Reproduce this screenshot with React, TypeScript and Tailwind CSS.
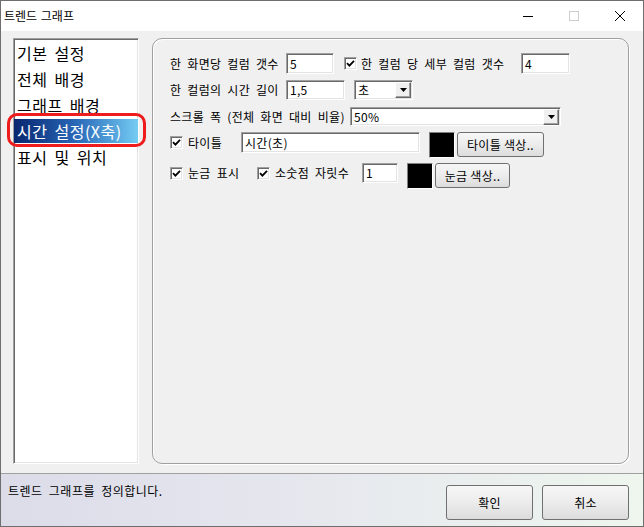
import React from 'react';

const KR = "font-['Noto_Sans_CJK_KR','Noto_Sans',sans-serif]";

// 움푹 들어간 입력칸 테두리
const sunken =
  'bg-white border border-t-[#a0a0a0] border-l-[#a0a0a0] border-r-white border-b-white shadow-[inset_1px_1px_0_#696969,inset_-1px_-1px_0_#e3e3e3]';

const pushButton =
  'border border-[#707070] rounded-[3px] bg-gradient-to-b from-[#f7f7f7] via-[#ececec] to-[#dcdcdc] text-[12px] text-black flex items-center justify-center whitespace-nowrap';

function Check() {
  return (
    <span className={`w-[13px] h-[13px] shrink-0 flex items-center justify-center ${sunken}`}>
      <svg width="9" height="9" viewBox="0 0 9 9">
        <path d="M1 4.2 L3.4 6.6 L8 1.8" stroke="#000" strokeWidth="1.8" fill="none" />
      </svg>
    </span>
  );
}

function ArrowBtn() {
  return (
    <span className="w-[16px] h-[16px] shrink-0 bg-[#f0f0f0] border border-t-white border-l-white border-r-[#696969] border-b-[#696969] shadow-[inset_-1px_-1px_0_#a0a0a0] flex items-center justify-center">
      <svg width="7" height="4" viewBox="0 0 7 4">
        <path d="M0 0 H7 L3.5 4 Z" fill="#000" />
      </svg>
    </span>
  );
}

function Combo({ value, w, h }: { value: string; w: string; h: string }) {
  return (
    <div className={`${w} ${h} shrink-0 ${sunken} flex items-center justify-between pl-[3px] pr-[1px]`}>
      <span className="text-[12px] leading-none">{value}</span>
      <ArrowBtn />
    </div>
  );
}

function Field({ value, w, h }: { value: string; w: string; h: string }) {
  return (
    <div className={`${w} ${h} shrink-0 ${sunken} flex items-center pl-[3px] text-[12px] leading-none`}>{value}</div>
  );
}

function Swatch() {
  return <div className="w-[26px] h-[26px] shrink-0 bg-black border border-t-[#808080] border-l-[#808080] border-r-white border-b-white" />;
}

const menuItems = ['기본 설정', '전체 배경', '그래프 배경', '시간 설정(X축)', '표시 및 위치'];

export default function App() {
  const selected = 3;

  return (
    <div className={`w-[644px] h-[527px] flex flex-col border border-[#6e6e6e] bg-white text-black [word-spacing:3px] tracking-[0.3px] ${KR}`}>
      {/* 타이틀 바 */}
      <div className="h-[30px] flex items-center bg-white shrink-0">
        <span className="pl-[3px] text-[12px] [word-spacing:1px] tracking-normal">트렌드 그래프</span>
        <div className="ml-auto flex h-full">
          <div className="w-[46px] h-full flex items-center justify-center">
            <svg width="10" height="1"><rect width="10" height="1" fill="#000" /></svg>
          </div>
          <div className="w-[46px] h-full flex items-center justify-center">
            <svg width="10" height="10"><rect x="0.5" y="0.5" width="9" height="9" fill="none" stroke="#cccccc" /></svg>
          </div>
          <div className="w-[46px] h-full flex items-center justify-center">
            <svg width="10" height="10"><path d="M0 0 L10 10 M10 0 L0 10" stroke="#000" strokeWidth="1" /></svg>
          </div>
        </div>
      </div>

      {/* 본문 */}
      <div className="h-[442px] shrink-0 bg-[#f0f0f0] flex pl-[12px] pr-[14px] pt-[7px] pb-[9px] gap-[13px]">
        {/* 왼쪽 목록 */}
        <div className={`w-[126px] h-full ${sunken} pt-[1px] flex flex-col`}>
          {menuItems.map((item, i) => (
            <div key={item} className="h-[26px] relative flex items-center text-[16px] tracking-[0.5px] whitespace-nowrap">
              {i === selected ? (
                <>
                  <div className="absolute left-[-7px] right-[-8px] top-[-5px] bottom-[-3px] border-[3px] border-[#ee1c1c] rounded-[10px]" />
                  <div className="w-full h-[24px] pl-[3px] flex items-center bg-gradient-to-r from-[#0a2670] via-[#2a68b8] to-[#74ccf2] text-white">
                    {item}
                  </div>
                </>
              ) : (
                <span className="pl-[3px]">{item}</span>
              )}
            </div>
          ))}
        </div>

        {/* 오른쪽 그룹 상자 */}
        <div className="flex-1 h-full border border-[#a0a0a0] rounded-[10px] shadow-[inset_1px_1px_0_#fff,1px_1px_0_#fff] pl-[17px] pt-[14px] flex flex-col text-[12px] whitespace-nowrap">
          <div className="flex items-center h-[21px]">
            <span className="w-[116px] shrink-0">한 화면당 컬럼 갯수</span>
            <Field value="5" w="w-[48px]" h="h-[21px]" />
            <span className="ml-[10px]"><Check /></span>
            <span className="ml-[4px] w-[160px] shrink-0">한 컬럼 당 세부 컬럼 갯수</span>
            <Field value="4" w="w-[49px]" h="h-[21px]" />
          </div>

          <div className="flex items-center h-[20px] mt-[6px]">
            <span className="w-[116px] shrink-0">한 컬럼의 시간 길이</span>
            <Field value="1,5" w="w-[59px]" h="h-[20px]" />
            <span className="ml-[9px]"><Combo value="초" w="w-[59px]" h="h-[20px]" /></span>
          </div>

          <div className="flex items-center h-[19px] mt-[7px]">
            <span className="w-[180px] shrink-0">스크롤 폭 (전체 화면 대비 비율)</span>
            <Combo value="50%" w="w-[211px]" h="h-[19px]" />
          </div>

          <div className="flex items-start mt-[6px]">
            <div className="flex items-center h-[21px] w-[71px] shrink-0">
              <Check />
              <span className="ml-[5px]">타이틀</span>
            </div>
            <Field value="시간(초)" w="w-[179px]" h="h-[21px]" />
            <span className="ml-[9px]"><Swatch /></span>
            <button className={`${pushButton} ml-[2px] w-[87px] h-[25px]`}>타이틀 색상..</button>
          </div>

          <div className="flex items-start mt-[5px]">
            <div className="flex items-center h-[20px] w-[87px] shrink-0">
              <Check />
              <span className="ml-[5px]">눈금 표시</span>
            </div>
            <div className="flex items-center h-[20px] w-[105px] shrink-0">
              <Check />
              <span className="ml-[5px]">소숫점 자릿수</span>
            </div>
            <Field value="1" w="w-[36px]" h="h-[20px]" />
            <span className="ml-[9px]"><Swatch /></span>
            <button className={`${pushButton} ml-[2px] w-[75px] h-[25px]`}>눈금 색상..</button>
          </div>
        </div>
      </div>

      {/* 하단 상태 영역 */}
      <div className="flex-1 border-t border-[#a0a0a0] bg-gradient-to-r from-[#dcdce9] via-[#e6e8ee] to-[#eef6ee] flex items-start pl-[7px] pr-[14px]">
        <span className="mt-[8px] text-[12px] tracking-[0.5px]">트렌드 그래프를 정의합니다.</span>
        <div className="ml-auto flex gap-[9px] mt-[11px]">
          <button className={`${pushButton} w-[87px] h-[35px]`}>확인</button>
          <button className={`${pushButton} w-[87px] h-[35px]`}>취소</button>
        </div>
      </div>
    </div>
  );
}
